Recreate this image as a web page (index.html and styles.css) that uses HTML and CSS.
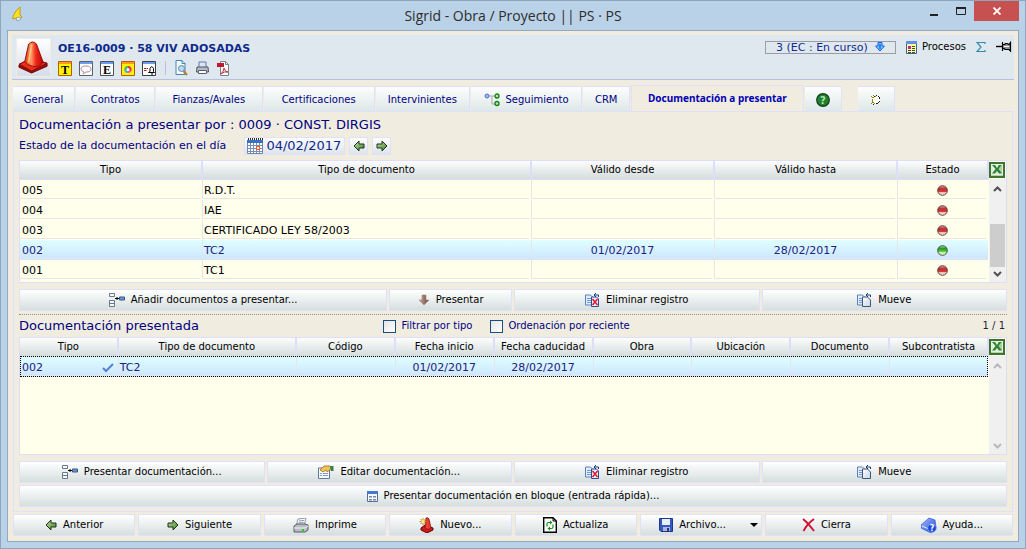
FILE: index.html
```html
<!DOCTYPE html>
<html lang="es">
<head>
<meta charset="utf-8">
<title>Sigrid - Obra / Proyecto || PS · PS</title>
<link rel="stylesheet" href="styles.css">
</head>
<body>
<svg class="defs" width="0" height="0" aria-hidden="true">
  <defs>
    <linearGradient id="gGreen" x1="0" y1="0" x2="1" y2="1"><stop offset="0" stop-color="#c4e4a4"/><stop offset="1" stop-color="#3c7c2c"/></linearGradient>
    <linearGradient id="gBrown" x1="0" y1="0" x2="1" y2="0"><stop offset="0" stop-color="#c8aca4"/><stop offset="1" stop-color="#6c3c34"/></linearGradient>
    <linearGradient id="gBlue" x1="0" y1="0" x2="1" y2="1"><stop offset="0" stop-color="#a8c4ff"/><stop offset="1" stop-color="#1840d0"/></linearGradient>
    <linearGradient id="gPage" x1="0" y1="0" x2="1" y2="1"><stop offset="0" stop-color="#ffffff"/><stop offset="1" stop-color="#c8d4e4"/></linearGradient>
    <linearGradient id="gCone" x1="0" y1="0" x2="1" y2="0"><stop offset="0" stop-color="#e83810"/><stop offset=".35" stop-color="#ff9860"/><stop offset=".6" stop-color="#f02818"/><stop offset="1" stop-color="#b00808"/></linearGradient>
    <linearGradient id="gRed" x1="0" y1="0" x2="0" y2="1"><stop offset="0" stop-color="#f0b0b0"/><stop offset=".3" stop-color="#b83434"/><stop offset=".6" stop-color="#d83030"/><stop offset=".65" stop-color="#e8b4a8"/><stop offset="1" stop-color="#fff0e4"/></linearGradient>
    <linearGradient id="gOk" x1="0" y1="0" x2="0" y2="1"><stop offset="0" stop-color="#b8e8b0"/><stop offset=".3" stop-color="#28942c"/><stop offset=".6" stop-color="#58d028"/><stop offset=".65" stop-color="#b8e8a0"/><stop offset="1" stop-color="#f0ffe8"/></linearGradient>
    <symbol id="left" viewBox="0 0 12 12"><path d="M1 6 6 1v3h5v4H6v3z" fill="url(#gGreen)" stroke="#1c3418"/></symbol>
    <symbol id="right" viewBox="0 0 12 12"><path d="M11 6 6 1v3H1v4h5v3z" fill="url(#gGreen)" stroke="#1c3418"/></symbol>
    <symbol id="down" viewBox="0 0 12 12"><path d="M6 11 1 6h3V1h4v5h3z" fill="url(#gBrown)" stroke="#a88c84" stroke-width=".7"/></symbol>
    <symbol id="bluedown" viewBox="0 0 10 10"><path d="M3 .5h4V4h2.500L5 9 .5 4H3z" fill="#70c8ff" stroke="#2458e8"/><path d="M5 2v5" stroke="#2088ff" stroke-width="2"/></symbol>
    <symbol id="cone" viewBox="0 0 32 36"><path d="M1 26 12 19l18 5v3L14 34 1 28z" fill="#a80c08" stroke="#600808"/><path d="M1 25 13 19l17 5-16 8z" fill="#e83018" stroke="#780808"/><path d="M11 4q4-4 8 0l7 19q-5 6-11 4-6-1-8-5z" fill="url(#gCone)" stroke="#980808"/><path d="m14 5-3 18" stroke="#ffc080" stroke-width="2" fill="none"/></symbol>
    <symbol id="flame" viewBox="0 0 12 16"><path d="M8 0v8l2 2-1 1H4L1 12V9l3-5z" fill="#ffe020" stroke="#b09000" stroke-width=".8"/><path d="m4 11 1 3 2-1 2-1-1-2z" fill="#e8f0f8" stroke="#8090a0" stroke-width=".7"/></symbol>
    <symbol id="noteT" viewBox="0 0 14 15"><path d="M.5.500h13v14H.5z" fill="#fff500" stroke="#b85c00"/><path d="M1 1h12v2H1z" fill="#ff9c20"/><text x="7" y="13" text-anchor="middle" class="glyph">T</text></symbol>
    <symbol id="noteE" viewBox="0 0 14 15"><path d="M.5.500h13v14H.5z" fill="#fff" stroke="#505050"/><path d="M1 1h12v2H1z" fill="#6c9cf0"/><text x="7" y="13" text-anchor="middle" class="glyph">E</text></symbol>
    <symbol id="noteChat" viewBox="0 0 14 15"><path d="M.5.500h13v14H.5z" fill="#f8fcfc" stroke="#606060"/><path d="M1 1h12v2H1z" fill="#6c9cf0"/><path d="M5 11q-3-1-3-3 0-3 5-3t5 3-5 3l-3 2z" fill="#fff" stroke="#bc8c9c"/></symbol>
    <symbol id="noteColor" viewBox="0 0 14 15"><path d="M.5.500h13v14H.5z" fill="#fff500" stroke="#b85c00"/><path d="M1 1h12v2H1z" fill="#ff9c20"/><circle cx="7" cy="8.500" r="3.500" fill="#f050d0"/><path d="M7 8.500V5a3.500 3.500 0 0 1 3 5.300z" fill="#f03030"/><path d="M7 8.500V12a3.500 3.500 0 0 1-3.500-3.500z" fill="#30b8e8"/><path d="M7 8.500H3.500A3.500 3.500 0 0 1 7 5z" fill="#40c040"/><circle cx="7" cy="8.500" r="1.500" fill="#fff"/></symbol>
    <symbol id="noteBell" viewBox="0 0 14 15"><path d="M.5.500h13v14H.5z" fill="#f8fcfc" stroke="#404040"/><path d="M1 1h12v2H1z" fill="#6c9cf0"/><path d="M2 7.500h4M2 9.500h3" stroke="#a02020" stroke-dasharray="2 .5"/><path d="M6.500 11.500h6l-1-1V7.500Q9.500 4 8 7.500v3zM9 13h2" fill="#fff" stroke="#000"/></symbol>
    <symbol id="preview" viewBox="0 0 13 16"><path d="M1 .5h6l3 3v11H1z" fill="#f4faff" stroke="#4884b4"/><path d="M7 .5v3h3" fill="#c8e0f4" stroke="#4884b4"/><path d="m8.500 11 3.500 4" stroke="#b87830" stroke-width="2"/><circle cx="6.500" cy="8.500" r="3" fill="#b8dcf4" stroke="#6888a8"/></symbol>
    <symbol id="print" viewBox="0 0 13 14"><path d="M3 1h7v6H3z" fill="#d4e8ff" stroke="#6878a0"/><path d="M1 6h11l.500 5h-12z" fill="#b8bcc8" stroke="#50545c"/><path d="M2.500 9.500h8v3h-8z" fill="#fff" stroke="#586070"/></symbol>
    <symbol id="pdf" viewBox="0 0 13 15"><path d="M3.500.500h5l3 3v11h-8z" fill="#fff" stroke="#808080"/><path d="M8.500.500v3h3" fill="none" stroke="#808080"/><path d="M0 2h7v4H0z" fill="#c01830"/><path d="M4 13q3-3 3-6 1 4 4 4-4-1-7 2" fill="none" stroke="#c03038"/></symbol>
    <symbol id="proc" viewBox="0 0 11 13"><path d="M.5.500h10v12H.5z" fill="#ffffa0" stroke="#3c64a4"/><path d="M0 0h11v3H0z" fill="#6090e8"/><path d="M2 5h3v3H2z" fill="#c020b0"/><path d="M6 5.500h3M6 7.500h3M2 9.500h3m1 0h3M2 11.500h3m1 0h3" stroke="#405020"/></symbol>
    <symbol id="sigma" viewBox="0 0 10 10"><path d="M9 2V.5H1L5 5 1 9.500h8V8" fill="none" stroke="#3888a8" stroke-width="1.200"/></symbol>
    <symbol id="pin" viewBox="0 0 16 12"><path d="M0 5.500h6" stroke="#000" stroke-width="1.400"/><path d="M6.500 1v9M6.500 3.500h2l1-1h1.500l2 1 1.500-2V10l-1.500-1.500h-4l-1-1h-1" fill="#909090" stroke="#000" stroke-width="1.200"/><path d="M8 5.500h5" stroke="#fff"/></symbol>
    <symbol id="tree" viewBox="0 0 16 14"><path d="M4 3h8M8 3v8h4" fill="none" stroke="#a8a8a8"/><circle cx="3" cy="3" r="2" fill="#a0b8f8" stroke="#5070c8"/><circle cx="13" cy="3" r="2" fill="#b8e8a8" stroke="#108010" stroke-width="1.300"/><circle cx="13" cy="10.500" r="2" fill="#b8e8a8" stroke="#108010" stroke-width="1.300"/></symbol>
    <symbol id="help" viewBox="0 0 14 14"><circle cx="7" cy="7" r="6.300" fill="#208030" stroke="#143c18" stroke-width="1.200"/><text x="7" y="11" text-anchor="middle" class="qmark">?</text></symbol>
    <symbol id="sun" viewBox="0 0 10 10"><path d="M3 1h4l2 2v4L7 9H3L1 7V3z" fill="#fff"/><path d="M0 1h1v1H0zM2 0h1v1H2zM4 1h1v1H4zM1 2h2v1H1zM1 4h1v3H1zM1 7h2v1H1zM0 8h1v1H0zM3 8h1v1H3z" fill="#8c8400"/><path d="M3 1h1v1H3zM5 0h1v1H5zM7 1h1v1H7zM8 2h1v2H8zM8 6h1v1H8zM7 7h1v1H7zM5 8h2v1H5zM2 9h1v1H2z" fill="#202018"/></symbol>
    <symbol id="cal" viewBox="0 0 16 16"><path d="M.5 2.500h15v13H.5z" fill="#fff" stroke="#7088a8"/><path d="M0 2h16v3H0z" fill="#3870c0"/><path d="M1 1h15" stroke="#303030" stroke-width="2" stroke-dasharray="1 1"/><path d="M3.500 5v10m3-10v10m3-10v10m3-10v10M1 7.500h14m-14 3h14m-14 3h14" stroke="#7890b8"/><path d="M9.500 8.500h3v3h-3z" fill="#fff" stroke="#e85820"/></symbol>
    <symbol id="xls" viewBox="0 0 16 16"><path d="M1 1h14v14H1z" fill="#e4f0dc" stroke="#3c7430" stroke-width="2"/><path d="M9 4h4M9 6h4M9 8h4M9 10h4" stroke="#78a870"/><path d="M3 3h3l2 3 2-3h2.500L9.500 7l3.500 4.500h-3L8 9l-2 2.500H3L6.500 7z" fill="#2c8438"/><path d="M2 13.500h12" stroke="#b8d0b0"/></symbol>
    <symbol id="add" viewBox="0 0 16 14"><path d="M.5.500h5v3h-5zM.5 7.500h5v6h-5zM.5 10.500h5" fill="#f4f8ff" stroke="#68788c"/><path d="M6 5.500h4M8 4v3" stroke="#000"/><path d="M10.500 4h5v3h-5z" fill="#6898d8" stroke="#385880"/></symbol>
    <symbol id="move" viewBox="0 0 15 14"><path d="M.5 2h5l3 3v7h-8z" fill="#e0ecff" stroke="#6080b8"/><path d="M2 5.500h4m-4 2h4m-4 2h4" stroke="#7898d0"/><path d="M5.500 4h5l3 3v6.500h-8z" fill="url(#gPage)" stroke="#405878"/><path d="M13.500 4V2H9m2-2L9 2l2 2" fill="none" stroke="#183c80"/></symbol>
    <symbol id="del" viewBox="0 0 15 14"><path d="M.5 2h5l3 3v7h-8z" fill="#e0ecff" stroke="#6080b8"/><path d="M2 5.500h4m-4 2h4m-4 2h4" stroke="#7898d0"/><path d="M6.500 4h5l2 2v7.500h-7z" fill="#e4ecff" stroke="#304c90"/><path d="M13.500 4V2H9m2-2L9 2l2 2" fill="none" stroke="#183c80"/><path d="m7.500 6 5 6m0-6-5 6" stroke="#e01830" stroke-width="1.500"/></symbol>
    <symbol id="edit" viewBox="0 0 16 14"><path d="M.5 3h11v10.500H.5z" fill="#f8fbff" stroke="#6078a0"/><path d="M2 8.500h2m1 0h5m-8 2h2m1 0h5" stroke="#8098c8"/><path d="M2 5 6 1h6l1 3-4 3-1-2-3 2z" fill="#f0c458" stroke="#a07018" stroke-width=".8"/><path d="M12 1h3.500v5H13z" fill="#388050"/></symbol>
    <symbol id="form" viewBox="0 0 11 11"><path d="M.5.500h10v10H.5z" fill="#f4f8ff" stroke="#586c98"/><path d="M0 0h11v3H0z" fill="#4878d0"/><path d="M2 5h3v1.500H2zM6 5h3v1.500H6zM2 8h3v1.500H2zM6 8h3v1.500H6z" fill="#7888a0"/></symbol>
    <symbol id="check" viewBox="0 0 12 10"><path d="m1 5 3 3 7-7" fill="none" stroke="#5880d0" stroke-width="2"/></symbol>
    <symbol id="printer" viewBox="0 0 16 15"><path d="m5 1 8-1-2 8H3z" fill="#f4f8ff" stroke="#788090" stroke-width=".8"/><path d="m6 3 5-.500M5.500 5l5-.500" stroke="#9098a8"/><path d="m1 8 3-2 8 0 3 1v5l-3 2H1z" fill="#b8bcc4" stroke="#585c64"/><path d="M1 10h11l3-2" fill="none" stroke="#f4f4f4"/><path d="M9 11h2v2H9z" fill="#20d020"/></symbol>
    <symbol id="newcone" viewBox="0 0 15 16"><path d="m2 11 4-3 8 3v2l-6 3-6-3z" fill="#d01818" stroke="#600808"/><path d="m7 1q2-1 3 1l2 9q-3 3-6 0z" fill="#e84030" stroke="#881010" stroke-width=".8"/><path d="M4 1v7M.5 4.500h7M1.500 2l5 5m0-5-5 5" stroke="#c88818"/><circle cx="4" cy="4.500" r="1.500" fill="#fff080"/></symbol>
    <symbol id="reload" viewBox="0 0 14 16"><path d="M.7.700H10L13.300 4v11.300H.7z" fill="#fff" stroke="#000" stroke-width="1.400"/><path d="M10 1v3h3" fill="none" stroke="#000"/><path d="M4 9.500V7q0-1.500 1.500-1.500H8M10 7.500V10q0 1.500-1.500 1.500H6" fill="none" stroke="#109018" stroke-width="1.200"/><path d="M7 3.500 9.500 5.500 7 7.500zM7 9.500 4.500 11.500 7 13.500z" fill="#109018"/></symbol>
    <symbol id="disk" viewBox="0 0 14 14"><path d="M.5.500h13v13H2L.5 12z" fill="#3858c0" stroke="#203888"/><path d="M3 1h8v6H3z" fill="#e8f0ff"/><path d="M4 9h7v4H4z" fill="#a8b8e0"/><path d="M8 10h2v3H8z" fill="#283878"/></symbol>
    <symbol id="cross" viewBox="0 0 13 14"><path d="M1 1q5 4 11 12M12 1Q5 6 1.500 13" fill="none" stroke="#d01030" stroke-width="1.900"/></symbol>
    <symbol id="book" viewBox="0 0 16 16"><path d="m0 8 8-7 6 2 1 8-5 5-10-5z" fill="url(#gBlue)" stroke="#3058d0" stroke-width=".7"/><path d="m1 9 9 4 4-4" fill="none" stroke="#e8f0ff"/><circle cx="11" cy="11" r="4.300" fill="#1c48d8" stroke="#88a8ff" stroke-width=".7"/><text x="11" y="14" text-anchor="middle" class="bookmark">?</text></symbol>
    <symbol id="led-red" viewBox="0 0 11 11"><circle cx="5.500" cy="5.500" r="4.800" fill="url(#gRed)" stroke="#584040"/></symbol>
    <symbol id="led-green" viewBox="0 0 11 11"><circle cx="5.500" cy="5.500" r="4.800" fill="url(#gOk)" stroke="#405040"/></symbol>
    <symbol id="up" viewBox="0 0 9 6"><path d="m1 5 3.500-3.500L8 5" fill="none" stroke="currentColor" stroke-width="2"/></symbol>
    <symbol id="dn" viewBox="0 0 9 6"><path d="m1 1 3.500 3.500L8 1" fill="none" stroke="currentColor" stroke-width="2"/></symbol>
  </defs>
</svg>

<div class="window">
  <header class="titlebar">
    <svg class="app-icon" width="12" height="16"><use href="#flame"/></svg>
    <h1 class="window-title">Sigrid - Obra / Proyecto || PS · PS</h1>
    <div class="window-controls">
      <button class="wc" aria-label="Minimizar"><svg width="8" height="10"><path d="M0 8h8v2H0z" fill="#222"/></svg></button>
      <button class="wc" aria-label="Maximizar"><svg width="10" height="8"><path d="M.5 1h9v6.500h-9z" fill="none" stroke="#222"/><path d="M0 0h10v2H0z" fill="#222"/></svg></button>
      <button class="wc wc-close" aria-label="Cerrar"><svg width="8" height="8"><path d="m.5.500 7 7m0-7-7 7" stroke="#fff" stroke-width="1.800"/></svg></button>
    </div>
  </header>

  <main class="client">
    <section class="project">
      <div class="project-icon"><svg width="31" height="35"><use href="#cone"/></svg></div>
      <div class="project-info">
        <h2 class="project-name">OE16-0009 · 58 VIV ADOSADAS</h2>
        <div class="toolbar">
          <button class="tool" aria-label="Texto"><svg width="14" height="15"><use href="#noteT"/></svg></button>
          <button class="tool" aria-label="Comentarios"><svg width="14" height="15"><use href="#noteChat"/></svg></button>
          <button class="tool" aria-label="Etiquetas"><svg width="14" height="15"><use href="#noteE"/></svg></button>
          <button class="tool" aria-label="Color"><svg width="14" height="15"><use href="#noteColor"/></svg></button>
          <button class="tool" aria-label="Avisos"><svg width="14" height="15"><use href="#noteBell"/></svg></button>
          <span class="tool-sep"></span>
          <button class="tool" aria-label="Vista previa"><svg width="13" height="16"><use href="#preview"/></svg></button>
          <button class="tool" aria-label="Imprimir"><svg width="13" height="14"><use href="#print"/></svg></button>
          <button class="tool" aria-label="PDF"><svg width="13" height="15"><use href="#pdf"/></svg></button>
        </div>
      </div>
      <div class="project-side">
        <button class="state">3 (EC : En curso)<svg width="10" height="10"><use href="#bluedown"/></svg></button>
        <button class="link-button"><svg width="11" height="13"><use href="#proc"/></svg>Procesos</button>
        <button class="tool-sm" aria-label="Suma"><svg width="10" height="10"><use href="#sigma"/></svg></button>
        <button class="tool-sm" aria-label="Fijar"><svg width="16" height="12"><use href="#pin"/></svg></button>
      </div>
    </section>

    <nav class="tabs">
      <button class="tab">General</button>
      <button class="tab">Contratos</button>
      <button class="tab">Fianzas/Avales</button>
      <button class="tab">Certificaciones</button>
      <button class="tab">Intervinientes</button>
      <button class="tab"><svg width="16" height="14"><use href="#tree"/></svg>Seguimiento</button>
      <button class="tab">CRM</button>
      <button class="tab tab-active">Documentación a presentar</button>
      <button class="tab" aria-label="Ayuda"><svg width="14" height="14"><use href="#help"/></svg></button>
      <span></span>
      <button class="tab" aria-label="Actualizar"><svg width="10" height="10"><use href="#sun"/></svg></button>
    </nav>

    <section class="panel">
      <h3 class="heading">Documentación a presentar por : 0009 · CONST. DIRGIS</h3>
      <div class="date-row">
        <label class="date-label" for="fecha">Estado de la documentación en el día</label>
        <span class="date-box"><svg width="16" height="16"><use href="#cal"/></svg><input id="fecha" class="date-input" type="text" value="04/02/2017"></span>
        <button class="step" aria-label="Día anterior"><svg width="12" height="12"><use href="#left"/></svg></button>
        <button class="step" aria-label="Día siguiente"><svg width="12" height="12"><use href="#right"/></svg></button>
      </div>

      <div class="grid-box">
        <div class="grid-main">
          <table class="grid grid-types">
            <colgroup><col class="t-tipo"><col class="t-doc"><col class="t-date"><col class="t-date"><col class="t-state"></colgroup>
            <thead><tr><th>Tipo</th><th>Tipo de documento</th><th>Válido desde</th><th>Válido hasta</th><th>Estado</th></tr></thead>
            <tbody>
              <tr><td>005</td><td>R.D.T.</td><td></td><td></td><td class="mid"><svg width="11" height="11"><use href="#led-red"/></svg></td></tr>
              <tr><td>004</td><td>IAE</td><td></td><td></td><td class="mid"><svg width="11" height="11"><use href="#led-red"/></svg></td></tr>
              <tr><td>003</td><td>CERTIFICADO LEY 58/2003</td><td></td><td></td><td class="mid"><svg width="11" height="11"><use href="#led-red"/></svg></td></tr>
              <tr class="selected"><td>002</td><td>TC2</td><td class="mid">01/02/2017</td><td class="mid">28/02/2017</td><td class="mid"><svg width="11" height="11"><use href="#led-green"/></svg></td></tr>
              <tr><td>001</td><td>TC1</td><td></td><td></td><td class="mid"><svg width="11" height="11"><use href="#led-red"/></svg></td></tr>
            </tbody>
          </table>
        </div>
        <div class="grid-side">
          <button class="excel" aria-label="Exportar a Excel"><svg width="16" height="16"><use href="#xls"/></svg></button>
          <div class="scroll">
            <svg width="9" height="6"><use href="#up"/></svg>
            <span class="thumb"></span>
            <svg width="9" height="6"><use href="#dn"/></svg>
          </div>
        </div>
      </div>

      <div class="actions actions-split">
        <button class="btn"><svg width="16" height="14"><use href="#add"/></svg>Añadir documentos a presentar...</button>
        <button class="btn"><svg width="12" height="12"><use href="#down"/></svg>Presentar</button>
        <button class="btn"><svg width="15" height="14"><use href="#del"/></svg>Eliminar registro</button>
        <button class="btn"><svg width="15" height="14"><use href="#move"/></svg>Mueve</button>
      </div>

      <div class="subhead">
        <h3 class="heading">Documentación presentada</h3>
        <div class="filters">
          <label class="filter"><input class="box" type="checkbox">Filtrar por tipo</label>
          <label class="filter"><input class="box" type="checkbox">Ordenación por reciente</label>
        </div>
        <span class="count">1 / 1</span>
      </div>

      <div class="grid-box grid-grow">
        <div class="grid-main">
          <table class="grid grid-docs">
            <colgroup><col class="d-tipo"><col class="d-doc"><col><col><col><col><col><col><col></colgroup>
            <thead><tr><th>Tipo</th><th>Tipo de documento</th><th>Código</th><th>Fecha inicio</th><th>Fecha caducidad</th><th>Obra</th><th>Ubicación</th><th>Documento</th><th>Subcontratista</th></tr></thead>
            <tbody><tr class="selected focused"><td><span class="with-check">002<svg width="12" height="10"><use href="#check"/></svg></span></td><td>TC2</td><td></td><td class="mid">01/02/2017</td><td class="mid">28/02/2017</td><td></td><td></td><td></td><td></td></tr></tbody>
          </table>
        </div>
        <div class="grid-side">
          <button class="excel" aria-label="Exportar a Excel"><svg width="16" height="16"><use href="#xls"/></svg></button>
          <div class="scroll scroll-off">
            <svg width="9" height="6"><use href="#up"/></svg>
            <svg width="9" height="6"><use href="#dn"/></svg>
          </div>
        </div>
      </div>

      <div class="actions actions-even">
        <button class="btn"><svg width="16" height="14"><use href="#add"/></svg>Presentar documentación...</button>
        <button class="btn"><svg width="16" height="14"><use href="#edit"/></svg>Editar documentación...</button>
        <button class="btn"><svg width="15" height="14"><use href="#del"/></svg>Eliminar registro</button>
        <button class="btn"><svg width="15" height="14"><use href="#move"/></svg>Mueve</button>
        <button class="btn btn-wide"><svg width="11" height="11"><use href="#form"/></svg>Presentar documentación en bloque (entrada rápida)...</button>
      </div>
    </section>

    <footer class="footer">
      <button class="btn"><svg width="12" height="12"><use href="#left"/></svg>Anterior</button>
      <button class="btn"><svg width="12" height="12"><use href="#right"/></svg>Siguiente</button>
      <button class="btn"><svg width="16" height="15"><use href="#printer"/></svg>Imprime</button>
      <button class="btn"><svg width="15" height="16"><use href="#newcone"/></svg>Nuevo...</button>
      <button class="btn"><svg width="14" height="16"><use href="#reload"/></svg>Actualiza</button>
      <button class="btn btn-menu"><span class="btn-body"><svg width="14" height="14"><use href="#disk"/></svg>Archivo...</span><svg width="8" height="4"><path d="M0 0h8L4 4z"/></svg></button>
      <button class="btn"><svg width="13" height="14"><use href="#cross"/></svg>Cierra</button>
      <button class="btn"><svg width="16" height="16"><use href="#book"/></svg>Ayuda...</button>
    </footer>
  </main>
</div>
</body>
</html>
```
FILE: styles.css
```css
* { box-sizing: border-box; }
body { margin: 0; font: 10px/14px "DejaVu Sans", Verdana, sans-serif; color: #000; }
button { font: inherit; color: inherit; margin: 0; padding: 0; border: 0; background: none; }
h1, h2, h3 { margin: 0; font-weight: normal; }
svg { display: block; flex: none; }
.defs { position: absolute; }
.glyph { font: bold 12px "Liberation Serif", serif; }
.qmark { font: bold 10px "DejaVu Sans", sans-serif; fill: #a8e8b0; }
.bookmark { font: bold 8px "DejaVu Sans", sans-serif; fill: #fff; }

.window { display: flex; flex-direction: column; min-height: 100vh; padding: 0 6px 6px; border: 1px solid #8ea6bc; background: #bad2e8; }

.titlebar { display: grid; grid-template-columns: 1fr auto 1fr; height: 29px; }
.app-icon { margin: 6px 0 0 5px; }
.window-title { font: 14px/30px "Open Sans", "Segoe UI", sans-serif; color: #2c2c2c; }
.window-controls { display: flex; justify-content: flex-end; align-items: flex-start; }
.wc { display: flex; align-items: center; justify-content: center; width: 27px; height: 20px; }
.wc-close { width: 45px; background: #c75050; }

.client { flex: 1; display: flex; flex-direction: column; padding: 4px 4px 5px; border: 1px solid #92a9c0; background: #f0ede0; }

.project { display: flex; align-items: flex-start; height: 45px; padding: 3px 2px 0 4px; border-bottom: 1px solid #b8c0e0; background: #dee8ee; }
.project-icon { padding: 1px; border: 1px solid #f0ede0; background: linear-gradient(#fff, #d8dce8); }
.project-info { flex: 1; padding: 4px 0 0 7px; }
.project-name { font-weight: bold; font-size: 11px; line-height: 14px; color: #10288c; }
.toolbar { display: flex; align-items: center; gap: 7px; height: 16px; margin-top: 4px; }
.tool { min-width: 14px; }
.tool-sep { width: 1px; height: 14px; margin: 0 2px; background: #b8bfe0; }
.project-side { display: flex; align-items: center; gap: 10px; padding-top: 2px; }
.state { display: flex; align-items: center; justify-content: center; gap: 7px; width: 131px; height: 13px; border: 1px solid #9c9ca4; font-size: 11px; line-height: 11px; color: #10288c; }
.link-button { display: flex; align-items: center; gap: 5px; }

.tabs { display: grid; grid-template-columns: 62fr 79fr 106fr 111fr 94fr 111fr 47fr 172fr 37fr 14fr 37fr 117fr; column-gap: 1px; height: 26px; margin: 5px 1px 0; align-items: end; }
.tab { display: flex; align-items: center; justify-content: center; gap: 6px; height: 25px; padding-top: 1px; border: solid #e0e0f8; border-width: 1px 1px 0 0; background: linear-gradient(#fdfdfd, #dee8e8); color: #000080; white-space: nowrap; }
.tab-active { height: 27px; margin-bottom: -1px; padding: 0 0 2px; border-width: 1px 1px 0; background: #f0ede0; color: #0000b4; font: bold 10px/14px "Noto Sans", Tahoma, sans-serif; }

.panel { flex: 1; display: flex; flex-direction: column; margin: 0 1px; padding: 5px 5px 4px; border: 1px solid #e0e0fa; }
.heading { font-size: 13px; line-height: 16px; color: #000080; }
.date-row { display: flex; align-items: center; gap: 4px; margin: 4px 0 5px; height: 18px; color: #000080; }
.date-label { font-size: 11px; margin-right: 14px; }
.date-box, .step { display: flex; align-items: center; height: 18px; border: 1px solid #e0e0f8; background: linear-gradient(#fdfdfd, #dee4ec); }
.date-box { width: 101px; gap: 3px; padding-left: 2px; }
.date-input { flex: 1; min-width: 0; padding: 0; border: 0; background: none; font: 13px/16px "DejaVu Sans", Verdana, sans-serif; color: #10288c; }
.step { width: 19px; justify-content: center; }

.grid-box { display: flex; border: 1px solid #dedefa; background: #ffffec; }
.grid-grow { flex: 1; }
.grid-main { flex: 1; min-height: 121px; }
.grid-grow .grid-main { min-height: 60px; }
.grid { width: 100%; table-layout: fixed; border-collapse: collapse; }
.grid th { height: 18px; padding: 0; border-right: 2px solid #dedefa; border-bottom: 1px solid #dedefa; background: linear-gradient(#fdfdfd, #d4dcdc); font-weight: normal; white-space: nowrap; }
.grid td { height: 20px; padding: 2px 2px 0; font-size: 11px; line-height: 18px; white-space: nowrap;
  background: linear-gradient(#e6e6ea, #e6e6ea) 0 18px / calc(100% - 2px) 1px no-repeat, linear-gradient(#e6e6ea, #e6e6ea) 0 0 / 1px 19px no-repeat; }
.grid td:first-child { background: linear-gradient(#e6e6ea, #e6e6ea) 0 18px / calc(100% - 2px) 1px no-repeat; }
.grid .mid { text-align: center; }
.grid .mid svg { margin: 0 auto; }
.grid .selected { background: linear-gradient(#e0ffff, #cce4ff); color: #202080; }
.grid .focused { outline: 1px dotted #000; outline-offset: -1px; }
.t-tipo { width: 18.8%; }
.t-doc { width: 34%; }
.t-date { width: 18.9%; }
.d-tipo { width: 10.1%; }
.d-doc { width: 18.4%; }
.with-check { display: flex; align-items: center; justify-content: space-between; padding-right: 2px; }
.grid-side { display: flex; flex-direction: column; width: 17px; }
.excel { height: 18px; }
.scroll { flex: 1; display: flex; flex-direction: column; align-items: center; justify-content: space-between; padding: 7px 0 5px; background: #f0f0f0; color: #505050; }
.scroll-off { color: #b8b8b8; }
.thumb { width: 15px; height: 43px; margin: 27px 0 0; background: #cdcdcd; }

.actions { display: grid; gap: 2px; margin-top: 6px; }
.actions-split { grid-template-columns: 3fr 1fr 2fr 2fr; padding-bottom: 3px; border-bottom: 1px dotted #8c8c8c; }
.actions-even { grid-template-columns: repeat(4, 1fr); }
.btn { display: flex; align-items: center; justify-content: center; gap: 6px; height: 22px; border: 1px solid #e0e0f8; border-radius: 1px; background: linear-gradient(#fff, #d6dede); white-space: nowrap; }
.btn-wide { grid-column: 1 / -1; }
.btn-menu { padding-right: 3px; }
.btn-body { flex: 1; display: flex; align-items: center; justify-content: center; gap: 6px; }

.subhead { display: grid; grid-template-columns: 365fr 600fr auto; align-items: center; height: 22px; padding-right: 2px; color: #000080; }
.filters { display: flex; gap: 18px; }
.filter { display: flex; align-items: center; gap: 5px; }
.box { appearance: none; width: 13px; height: 13px; margin: 0; border: 1px solid #1c4c80; background: linear-gradient(135deg, #e4e4e4, #fff); }
.box:checked { background: #1c4c80; }
.count { color: #202040; }

.footer { display: grid; grid-template-columns: repeat(8, 1fr); gap: 3px; margin: 2px 1px 0; }
```
